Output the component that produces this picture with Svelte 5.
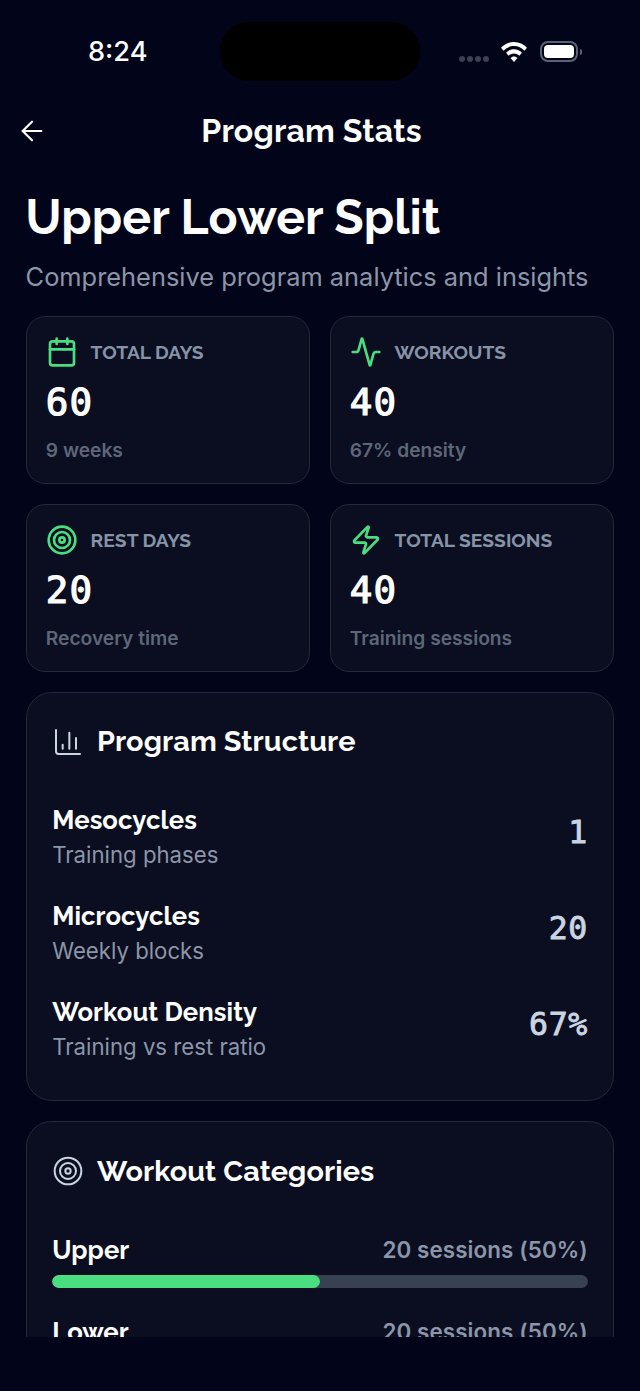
<script>
  const stats = [
    { icon: 'calendar', label: 'TOTAL DAYS', value: '60', note: '9 weeks' },
    { icon: 'activity', label: 'WORKOUTS', value: '40', note: '67% density' },
    { icon: 'target', label: 'REST DAYS', value: '20', note: 'Recovery time' },
    { icon: 'zap', label: 'TOTAL SESSIONS', value: '40', note: 'Training sessions' }
  ];
  const rows = [
    { name: 'Mesocycles', sub: 'Training phases', value: '1' },
    { name: 'Microcycles', sub: 'Weekly blocks', value: '20' },
    { name: 'Workout Density', sub: 'Training vs rest ratio', value: '67%' }
  ];
  const cats = [
    { name: 'Upper', text: '20 sessions (50%)', pct: 50 },
    { name: 'Lower', text: '20 sessions (50%)', pct: 50 }
  ];
</script>

{#snippet icon(name)}
  <svg class="ic" viewBox="0 0 24 24" fill="none" stroke="currentColor" stroke-linecap="round" stroke-linejoin="round">
    {#if name === 'calendar'}
      <path d="M8 2v4" /><path d="M16 2v4" /><rect width="18" height="18" x="3" y="4" rx="2" /><path d="M3 10h18" />
    {:else if name === 'activity'}
      <path d="M22 12h-2.48a2 2 0 0 0-1.93 1.46l-2.35 8.36a.25.25 0 0 1-.48 0L9.24 2.18a.25.25 0 0 0-.48 0l-2.35 8.36A2 2 0 0 1 4.49 12H2" />
    {:else if name === 'target'}
      <circle cx="12" cy="12" r="10" /><circle cx="12" cy="12" r="6" /><circle cx="12" cy="12" r="2" />
    {:else if name === 'zap'}
      <path d="M4 14a1 1 0 0 1-.78-1.63l9.9-10.2a.5.5 0 0 1 .86.46l-1.92 6.02A1 1 0 0 0 13 10h7a1 1 0 0 1 .78 1.63l-9.9 10.2a.5.5 0 0 1-.86-.46l1.92-6.02A1 1 0 0 0 11 14z" />
    {:else if name === 'chart'}
      <path d="M3 3v16a2 2 0 0 0 2 2h16" /><path d="M18 17V9" /><path d="M13 17V5" /><path d="M8 17v-3" />
    {/if}
  </svg>
{/snippet}

<div class="screen">
  <div class="status">
    <div class="time">8:24</div>
    <div class="island"></div>
    <div class="sys">
      <div class="dots"><i></i><i></i><i></i><i></i></div>
      <svg class="wifi" viewBox="1.4 3 25.2 18" preserveAspectRatio="none" fill="#fff">
        <path d="M14 3C9 3 4.600 5 1.400 8.200l2.500 2.700C6.500 8.300 10 6.700 14 6.700s7.500 1.600 10.100 4.200l2.500-2.700C23.400 5 19 3 14 3z" />
        <path d="M14 9.500c-3 0-5.700 1.200-7.700 3.200l2.500 2.700c1.300-1.300 3.100-2.100 5.200-2.100s3.900.8 5.200 2.100l2.500-2.700c-2-2-4.700-3.200-7.700-3.200z" />
        <path d="M14 16c-1.300 0-2.500.5-3.400 1.400L14 21l3.400-3.600C16.500 16.500 15.300 16 14 16z" />
      </svg>
      <div class="battery"><div class="cell"></div></div>
      <div class="nub"></div>
    </div>
  </div>

  <header class="bar">
    <svg class="back" viewBox="0 0 24 24" fill="none" stroke="currentColor" stroke-linecap="round" stroke-linejoin="round">
      <path d="m12 19-7-7 7-7" /><path d="M19 12H5" />
    </svg>
    <h2>Program Stats</h2>
  </header>

  <main class="scroll">
    <h1>Upper Lower Split</h1>
    <p class="lead">Comprehensive program analytics and insights</p>

    <div class="grid">
      {#each stats as s}
        <section class="stat">
          <div class="stat-head">
            <span class="green">{@render icon(s.icon)}</span>
            <span class="label">{s.label}</span>
          </div>
          <div class="value">{s.value}</div>
          <div class="note">{s.note}</div>
        </section>
      {/each}
    </div>

    <section class="panel">
      <div class="panel-head">
        <span class="light">{@render icon('chart')}</span>
        <h3>Program Structure</h3>
      </div>
      <div class="rows">
        {#each rows as r}
          <div class="row">
            <div>
              <div class="name">{r.name}</div>
              <div class="sub">{r.sub}</div>
            </div>
            <div class="num">{r.value}</div>
          </div>
        {/each}
      </div>
    </section>

    <section class="panel">
      <div class="panel-head">
        <span class="light">{@render icon('target')}</span>
        <h3>Workout Categories</h3>
      </div>
      <div class="cats">
        {#each cats as c}
          <div>
            <div class="cat-top">
              <span class="cat-name">{c.name}</span>
              <span class="cat-text">{c.text}</span>
            </div>
            <div class="track"><div class="fill" style="width:{c.pct}%"></div></div>
          </div>
        {/each}
      </div>
    </section>
  </main>
</div>

<style>
  :global(body) { margin: 0; background: #02051a; }
  .screen {
    width: 640px; height: 1391px; display: flex; flex-direction: column;
    background: #02051a; color: #fff; font-family: Inter, sans-serif; overflow: hidden;
    box-sizing: border-box; padding-bottom: 54px;
  }
  .status { display: grid; grid-template-columns: 220px 200px 220px; height: 58px; margin-top: 22px; flex: none; }
  .time { font: 500 27.2px/58px Inter, sans-serif; padding-left: 88px; margin-top: 1px; }
  .island { background: #000; border-radius: 29px; }
  .sys { display: flex; align-items: center; padding-left: 39px; height: 58px; }
  .dots { display: flex; gap: 2px; margin-top: 16px; margin-right: 12px; }
  .dots i { width: 6px; height: 6px; border-radius: 50%; background: #3a4252; }
  .wifi { width: 26px; height: 20px; margin-right: 13px; margin-top: 2px; }
  .battery { width: 38px; height: 21px; border: 2px solid #5a6275; border-radius: 8px; padding: 2px; box-sizing: border-box; margin-top: 1px; }
  .cell { width: 100%; height: 100%; background: #fff; border-radius: 4px; }
  .nub { width: 2.500px; height: 6px; background: #5a6275; border-radius: 0 2px 2px 0; margin-left: 1.500px; margin-top: 1px; }

  .bar { flex: none; height: 72px; margin-top: 15px; position: relative; display: flex; align-items: center; justify-content: center; }
  .back { position: absolute; left: 16px; top: 20px; width: 32px; height: 32px; stroke-width: 1.6; }
  h2 { margin: 0 0 0 -17px; font: 700 32px/40px Raleway, Lato, sans-serif; letter-spacing: 0.2px; }

  .scroll { flex: 1; min-height: 0; overflow: hidden; padding: 0 25.6px; }
  h1 { margin: 20px 0 0; font: 700 48px/60px Raleway, Lato, sans-serif; letter-spacing: 0.1px; }
  .lead { margin: 12px 0 0; font: 400 25.4px/36px Inter, sans-serif; color: #8c96a8; }

  .grid { display: grid; grid-template-columns: 1fr 1fr; gap: 20px 19.2px; margin-top: 20.8px; }
  .stat {
    height: 168px; box-sizing: border-box; padding: 19px 19.2px; background: #0a0e20;
    border: 1.6px solid #222a3b; border-radius: 19.2px;
  }
  .stat-head { display: flex; align-items: center; gap: 12.8px; height: 32px; }
  .green { color: #4ade80; display: flex; }
  .light { color: #cbd5e1; display: flex; }
  .ic { width: 32px; height: 32px; stroke-width: 2; display: block; }
  .light .ic { stroke-width: 1.5; }
  .label { font: 700 19.2px/28px Raleway, Lato, sans-serif; color: #8793a7; }
  .value { font: 400 37.5px/51.2px "DejaVu Sans Mono", monospace; letter-spacing: 1.2px; -webkit-text-stroke: 1.2px #fff; margin-top: 9px; margin-bottom: 1px; }
  .note { font: 600 19.2px/25.6px Inter, sans-serif; color: #5d6778; margin-top: 9.6px; }

  .panel {
    margin-top: 20px; background: #0a0e20; border: 1.6px solid #222a3b; border-radius: 25.6px;
    box-sizing: border-box; padding: 26.6px 25.6px 24.6px;
  }
  .panel-head { display: flex; align-items: center; gap: 12.8px; height: 44.8px; }
  h3 { margin: 0; font: 700 28.8px/44.8px Raleway, Lato, sans-serif; letter-spacing: 0.12px; }
  .rows { margin-top: 23.6px; display: flex; flex-direction: column; }
  .row { display: flex; justify-content: space-between; align-items: center; padding: 12.8px 0; }
  .name { font: 700 25.6px/38.4px Raleway, Lato, sans-serif; letter-spacing: 0.1px; }
  .sub { font: 400 22.2px/32px Inter, sans-serif; color: #8c96a8; }
  .num { font: 400 31.5px/40px "DejaVu Sans Mono", monospace; letter-spacing: 0.6px; -webkit-text-stroke: 0.9px #cbd5e1; color: #cbd5e1; margin-bottom: 8px; }
  .cats { margin-top: 37.4px; display: flex; flex-direction: column; gap: 25px; }
  .cat-top { display: flex; justify-content: space-between; align-items: center; height: 38.4px; }
  .cat-name { font: 700 25.6px/38.4px Raleway, Lato, sans-serif; letter-spacing: 0.1px; }
  .cat-text { font: 600 22.4px/32px Inter, sans-serif; color: #8c96a8; letter-spacing: 0.1px; }
  .track { height: 12.8px; border-radius: 7px; background: #374151; overflow: hidden; margin-top: 5.4px; }
  .fill { height: 100%; background: #4ade80; border-radius: 7px; }
</style>
